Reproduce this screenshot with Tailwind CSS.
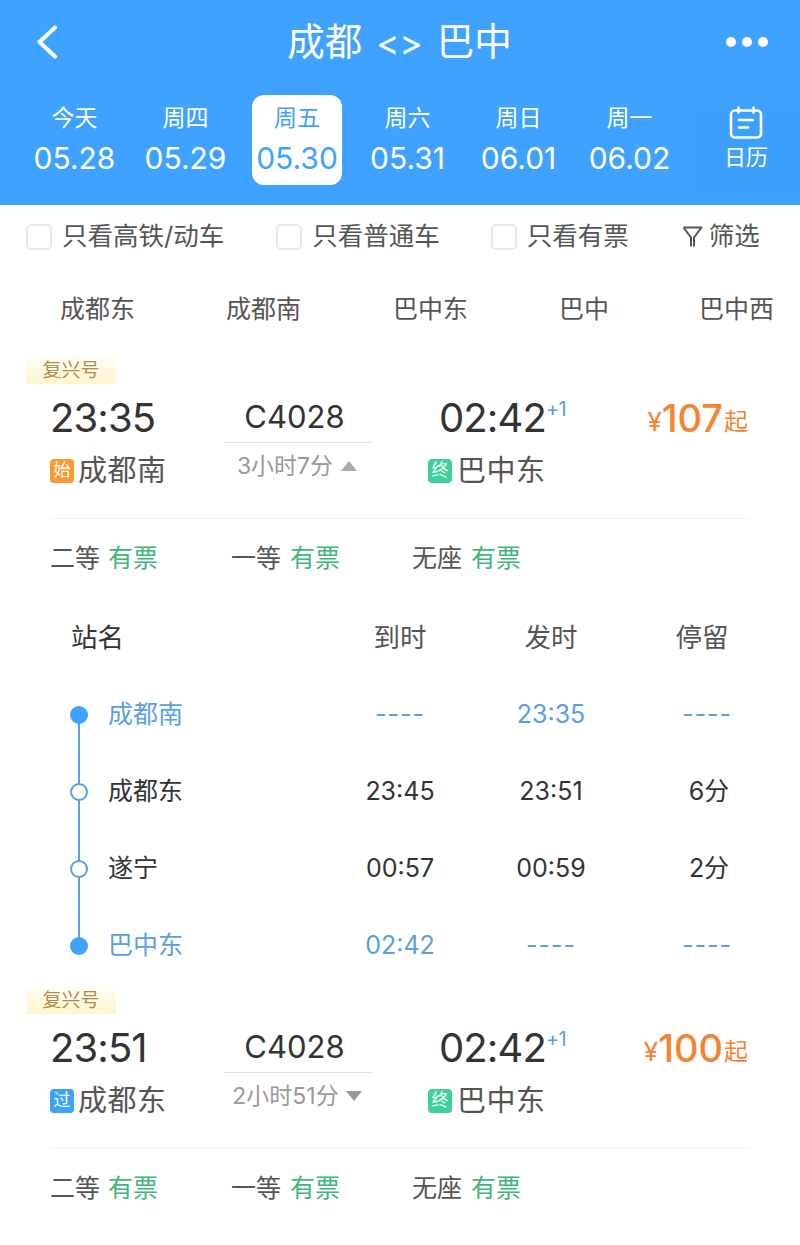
<!DOCTYPE html>
<html lang="zh"><head><meta charset="utf-8"><script src="https://cdn.jsdelivr.net/npm/@tailwindcss/browser@4"></script></head>
<body class="m-0 bg-white font-['Inter','Noto_Sans_CJK_SC',sans-serif]">
<div class="w-[800px] h-[1245px] overflow-hidden bg-white text-[#333]">
<header class="h-[205px] bg-[#3fa2ff] text-white">
  <div class="relative flex h-[84px] items-center justify-center gap-[14px] pr-[1px]">
    <svg class="absolute left-[36px] top-[25px]" width="24" height="34" viewBox="0 0 24 34" fill="none" stroke="#fff" stroke-width="4" stroke-linecap="round" stroke-linejoin="round"><path d="M19 2.500 3.500 17 19 31.500"/></svg>
    <span class="text-[37.500px] leading-none">成都</span><span class="text-[35px] leading-none">&lt;&gt;</span><span class="text-[37.500px] leading-none">巴中</span>
    <div class="absolute left-[726px] top-[37px] flex gap-[6px]"><i class="size-[10px] rounded-full bg-white"></i><i class="size-[10px] rounded-full bg-white"></i><i class="size-[10px] rounded-full bg-white"></i></div>
  </div>
  <div class="flex h-[90px] pl-[19px] mt-[11px]">
    <div class="w-[111px] flex flex-col items-center"><span class="mt-[8px] text-[23px] leading-[30px]">今天</span><span class="mt-[7px] text-[30px] leading-[36px]">05.28</span></div>
    <div class="w-[111px] flex flex-col items-center"><span class="mt-[8px] text-[23px] leading-[30px]">周四</span><span class="mt-[7px] text-[30px] leading-[36px]">05.29</span></div>
    <div class="w-[90px] mx-[11px] flex flex-col items-center rounded-[12px] bg-white text-[#3fa2ff]"><span class="mt-[8px] text-[23px] leading-[30px]">周五</span><span class="mt-[7px] text-[30px] leading-[36px]">05.30</span></div>
    <div class="w-[111px] -ml-[1px] flex flex-col items-center"><span class="mt-[8px] text-[23px] leading-[30px]">周六</span><span class="mt-[7px] text-[30px] leading-[36px]">05.31</span></div>
    <div class="w-[111px] flex flex-col items-center"><span class="mt-[8px] text-[23px] leading-[30px]">周日</span><span class="mt-[7px] text-[30px] leading-[36px]">06.01</span></div>
    <div class="w-[111px] flex flex-col items-center"><span class="mt-[8px] text-[23px] leading-[30px]">周一</span><span class="mt-[7px] text-[30px] leading-[36px]">06.02</span></div>
    <div class="ml-[5px] mt-[10px] flex h-[90px] w-[110px] flex-col items-center bg-[#3ea0fd]">
      <svg class="mt-[1px] ml-[2px]" width="34" height="33" viewBox="0 0 34 33" fill="none" stroke="#fff" stroke-width="2.600" stroke-linecap="round"><rect x="2" y="4.500" width="30" height="27" rx="4"/><path d="M9.500 1.500v5M24.500 1.500v5M10 14h14M10 21.500h9"/></svg>
      <span class="mt-[3px] ml-[2px] text-[22px] leading-[30px]">日历</span>
    </div>
  </div>
</header>

<div class="flex h-[63px] items-center text-[25.500px] text-[#555]">
  <i class="ml-[26px] size-[26px] rounded-[5px] border-2 border-[#e8e8e8]"></i><span class="ml-[10px]">只看高铁/动车</span>
  <i class="ml-[52px] size-[26px] rounded-[5px] border-2 border-[#e8e8e8]"></i><span class="ml-[10px]">只看普通车</span>
  <i class="ml-[51px] size-[26px] rounded-[5px] border-2 border-[#e8e8e8]"></i><span class="ml-[10px]">只看有票</span>
  <svg class="ml-[53px]" width="21" height="24" viewBox="0 0 21 24" fill="none" stroke="#555" stroke-width="2" stroke-linejoin="round"><path d="M1.500 2.500h18L12 12.500V21.500M9 21.500V12.500L1.500 2.500"/></svg>
  <span class="ml-[6px]">筛选</span>
</div>

<div class="flex h-[90px] pt-[20px] text-[25px] leading-[42px] text-[#555]">
  <span class="ml-[60px]">成都东</span><span class="ml-[91px]">成都南</span><span class="ml-[92px]">巴中东</span><span class="ml-[91px]">巴中</span><span class="ml-[90px]">巴中西</span>
</div>

<section class="h-[252px]">
  <div class="ml-[26px] h-[26px] w-[90px] bg-gradient-to-b from-[#fffdf2] to-[#fff5cf] text-center text-[19px] leading-[26px] text-[#b18d4d]">复兴号</div>
  <div class="flex h-[112px]">
    <div class="w-[224px] pl-[50px]">
      <div class="text-[40px] leading-[68px] tracking-[-0.900px] text-[#333]">23:35</div>
      <div class="flex h-[40px] items-center -mt-[1px]"><i class="mr-[4px] flex size-[24px] items-center justify-center rounded-[4px] bg-[#fb9a2e] text-[17px] not-italic text-white">始</i><span class="text-[29px] tracking-[0.500px] text-[#555]">成都南</span></div>
    </div>
    <div class="w-[148px] text-center">
      <div class="h-[59px] border-b border-[#ddd] pr-[7px] pt-[7px] text-[31px] leading-[52px] text-[#333]">C4028</div>
      <div class="mt-[8px] flex h-[30px] items-center justify-center gap-[8px] pr-[2px] text-[23px] text-[#999]">3小时7分<svg width="16" height="10" viewBox="0 0 16 10"><path d="M8 0 16 10H0Z" fill="#aaa"/></svg></div>
    </div>
    <div class="w-[56px]"></div>
    <div class="w-[200px]">
      <div class="flex items-start pl-[11px]"><span class="text-[40px] leading-[68px] tracking-[-0.900px]">02:42</span><span class="mt-[15px] text-[20px] leading-[20px] tracking-[-0.500px] text-[#5a9fe0]">+1</span></div>
      <div class="flex h-[40px] items-center -mt-[1px]"><i class="mr-[5px] flex size-[24px] items-center justify-center rounded-[4px] bg-[#3ed19a] text-[17px] not-italic text-white">终</i><span class="text-[29px] tracking-[0.500px] text-[#555]">巴中东</span></div>
    </div>
    <div class="flex h-[68px] w-[120px] items-center justify-end text-[#f58331]"><span class="text-[26px] mt-[6px]">¥</span><span class="text-[38px] font-medium leading-[68px]">107</span><span class="text-[24px] mt-[8px] ml-[1px]">起</span></div>
  </div>
  <div class="ml-[51px] h-[1px] w-[698px] bg-[#f4f4f4] mt-[22px]"></div>
  <div class="flex h-[80px] items-center pl-[50px] text-[25px] text-[#555]">
    <span class="flex w-[181px] gap-[8px]">二等<b class="font-normal text-[#3fb67c]">有票</b></span><span class="flex w-[181px] gap-[9px]">一等<b class="font-normal text-[#3fb67c]">有票</b></span><span class="flex gap-[9px]">无座<b class="font-normal text-[#3fb67c]">有票</b></span>
  </div>
</section>

<section class="h-[378px]">
  <div class="grid h-[56px] grid-cols-[324px_152px_150px_152px] items-center text-center text-[26.500px] text-[#555]"><span class="pl-[71px] text-left text-[#333]">站名</span><span>到时</span><span>发时</span><span>停留</span></div>
  <div class="relative pt-[10px]">
    <i class="absolute left-[78px] top-[48px] h-[231px] w-[2px] bg-[#5a9fe0]"></i>
    <div class="grid h-[77px] grid-cols-[324px_152px_150px_152px] items-center text-center text-[25px] text-[#5a9fe0]">
      <div class="relative flex items-center pl-[70px]"><i class="size-[18px] rounded-full bg-[#3fa2ff]"></i><span class="ml-[20px]">成都南</span></div><span class="tracking-[1px]">----</span><span>23:35</span><span class="pl-[10px] tracking-[1px]">----</span>
    </div>
    <div class="grid h-[77px] grid-cols-[324px_152px_150px_152px] items-center text-center text-[25px] text-[#333]">
      <div class="relative flex items-center pl-[70px]"><i class="size-[18px] rounded-full border-2 border-[#5a9fe0] bg-white"></i><span class="ml-[20px]">成都东</span></div><span>23:45</span><span>23:51</span><span class="pl-[14px]">6分</span>
    </div>
    <div class="grid h-[77px] grid-cols-[324px_152px_150px_152px] items-center text-center text-[25px] text-[#333]">
      <div class="relative flex items-center pl-[70px]"><i class="size-[18px] rounded-full border-2 border-[#5a9fe0] bg-white"></i><span class="ml-[20px]">遂宁</span></div><span>00:57</span><span>00:59</span><span class="pl-[14px]">2分</span>
    </div>
    <div class="grid h-[77px] grid-cols-[324px_152px_150px_152px] items-center text-center text-[25px] text-[#5a9fe0]">
      <div class="relative flex items-center pl-[70px]"><i class="size-[18px] rounded-full bg-[#3fa2ff]"></i><span class="ml-[20px]">巴中东</span></div><span>02:42</span><span class="tracking-[1px]">----</span><span class="pl-[10px] tracking-[1px]">----</span>
    </div>
  </div>
</section>

<section class="h-[252px]">
  <div class="ml-[26px] h-[26px] w-[90px] bg-gradient-to-b from-[#fffdf2] to-[#fff5cf] text-center text-[19px] leading-[26px] text-[#b18d4d]">复兴号</div>
  <div class="flex h-[112px]">
    <div class="w-[224px] pl-[50px]">
      <div class="text-[40px] leading-[68px] tracking-[-0.900px] text-[#333]">23:51</div>
      <div class="flex h-[40px] items-center -mt-[1px]"><i class="mr-[4px] flex size-[24px] items-center justify-center rounded-[4px] bg-[#3fa2f5] text-[17px] not-italic text-white">过</i><span class="text-[29px] tracking-[0.500px] text-[#555]">成都东</span></div>
    </div>
    <div class="w-[148px] text-center">
      <div class="h-[59px] border-b border-[#ddd] pr-[7px] pt-[7px] text-[31px] leading-[52px] text-[#333]">C4028</div>
      <div class="mt-[8px] flex h-[30px] items-center justify-center gap-[7px] pr-[2px] text-[23px] text-[#999]">2小时51分<svg width="16" height="10" viewBox="0 0 16 10"><path d="M8 10 16 0H0Z" fill="#999"/></svg></div>
    </div>
    <div class="w-[56px]"></div>
    <div class="w-[200px]">
      <div class="flex items-start pl-[11px]"><span class="text-[40px] leading-[68px] tracking-[-0.900px]">02:42</span><span class="mt-[15px] text-[20px] leading-[20px] tracking-[-0.500px] text-[#5a9fe0]">+1</span></div>
      <div class="flex h-[40px] items-center -mt-[1px]"><i class="mr-[5px] flex size-[24px] items-center justify-center rounded-[4px] bg-[#3ed19a] text-[17px] not-italic text-white">终</i><span class="text-[29px] tracking-[0.500px] text-[#555]">巴中东</span></div>
    </div>
    <div class="flex h-[68px] w-[120px] items-center justify-end text-[#f58331]"><span class="text-[26px] mt-[6px]">¥</span><span class="text-[38px] font-medium leading-[68px]">100</span><span class="text-[24px] mt-[8px] ml-[1px]">起</span></div>
  </div>
  <div class="ml-[51px] h-[1px] w-[698px] bg-[#f4f4f4] mt-[22px]"></div>
  <div class="flex h-[80px] items-center pl-[50px] text-[25px] text-[#555]">
    <span class="flex w-[181px] gap-[8px]">二等<b class="font-normal text-[#3fb67c]">有票</b></span><span class="flex w-[181px] gap-[9px]">一等<b class="font-normal text-[#3fb67c]">有票</b></span><span class="flex gap-[9px]">无座<b class="font-normal text-[#3fb67c]">有票</b></span>
  </div>
</section>
</div>
</body></html>
